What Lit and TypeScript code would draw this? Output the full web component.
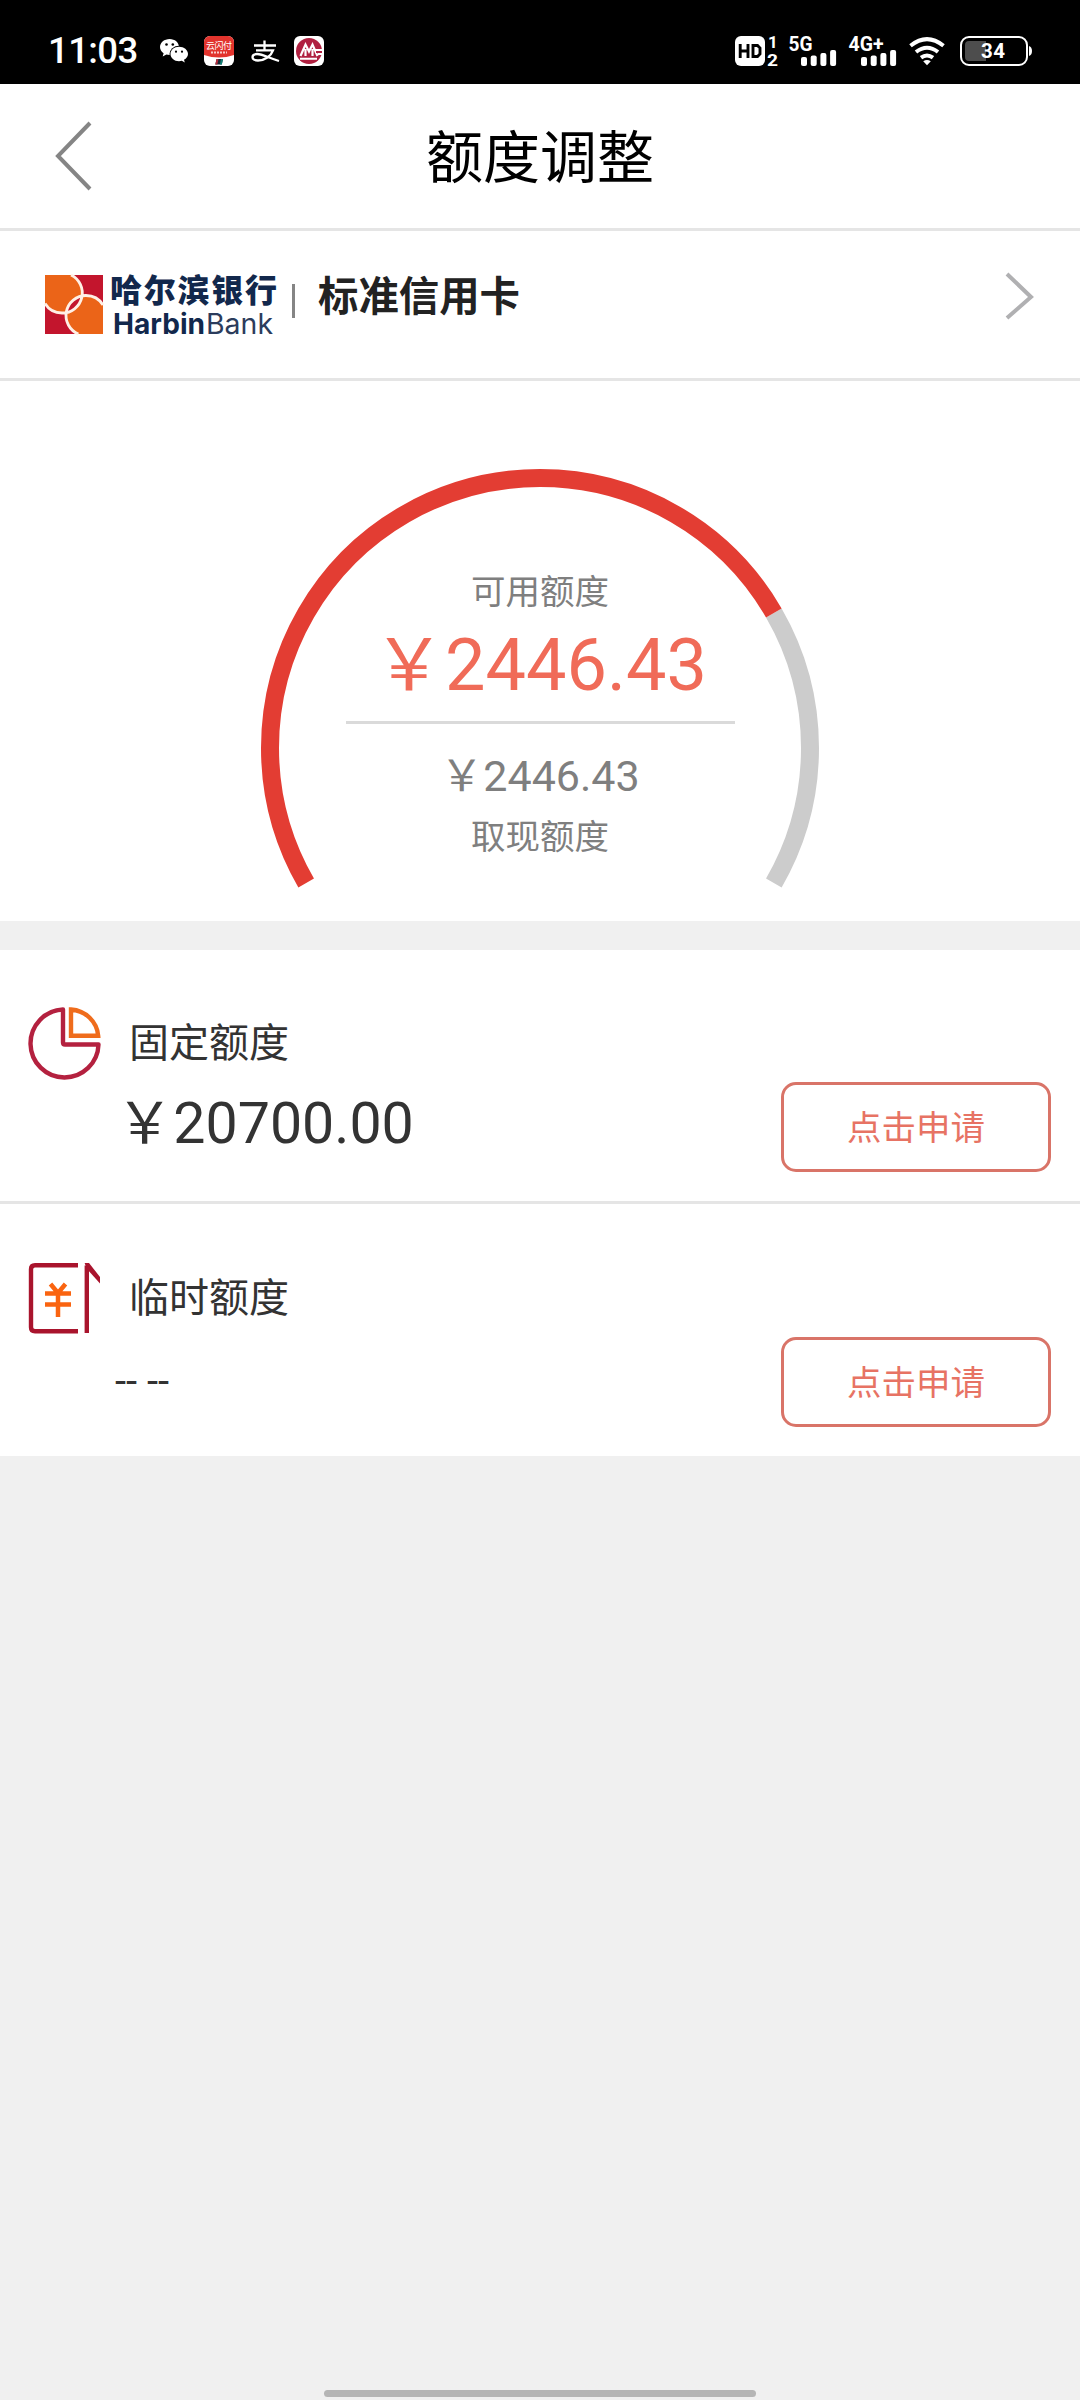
import { LitElement, html, css, svg } from "lit";
import { customElement, property } from "lit/decorators.js";

const SANS = css`Roboto, "Noto Sans CJK SC", sans-serif`;

@customElement("status-bar")
class StatusBar extends LitElement {
  static styles = css`
    :host { display: block; }
    .bar {
      box-sizing: border-box; height: 84px; padding: 17px 48px 0 48px; background: #000; color: #fff;
      display: flex; align-items: center; justify-content: space-between; font-family: ${SANS};
    }
    .side { display: flex; align-items: center; }
    .time { font-size: 36.500px; line-height: 50px; font-weight: 500; width: 112px; letter-spacing: -0.6px; }
    svg { display: block; flex: none; overflow: visible; font-family: ${SANS}; }
    .wechat { margin-right: 16px; }
    .union { margin-right: 17px; }
    .ali { margin-right: 14px; }
    .hd { margin-right: 11px; }
    .net { margin-right: 12px; }
    .wifi { margin-right: 15px; }
  `;

  private signal(label: string) {
    return html`<svg class="net" width="48" height="30" viewBox="0 0 48 30" fill="#fff">
      <text x="-0.5" y="14.500" font-size="20.500" font-weight="700" textLength=${label.length > 2 ? 35 : 24}
        lengthAdjust="spacingAndGlyphs">${label}</text>
      ${[21, 19.5, 17, 14].map((y, i) => svg`<rect x=${12 + i * 9.7} y=${y} width="6" height=${30 - y} rx="2" />`)}
    </svg>`;
  }

  render() {
    return html`<div class="bar">
      <div class="side">
        <div class="time">11:03</div>
        <svg class="wechat" width="28" height="26" viewBox="0 0 28 26">
          <path fill="#fff" d="M9.600 1C4.300 1 0 4.600 0 9c0 2.600 1.400 4.800 3.600 6.300L2.700 18.500l3.700-1.900c1 .3 2.100.4 3.200.4C14.900 17 19 13.400 19 9S14.900 1 9.600 1Z"/>
          <ellipse cx="19" cy="16" rx="9.500" ry="8.300" fill="#000"/>
          <path fill="#fff" d="M19 8.800c-4.800 0-8.500 3.200-8.500 7.200s3.700 7.200 8.500 7.200c1 0 1.900-.1 2.800-.4l3 1.700-.8-2.700c2.400-1.300 4-3.400 4-5.800 0-4-4-7.200-9-7.200Z"/>
          <g fill="#000"><circle cx="6.500" cy="6.500" r="1.300"/><circle cx="12.800" cy="6.500" r="1.300"/><circle cx="16" cy="13.700" r="1.100"/><circle cx="22" cy="13.700" r="1.100"/></g>
        </svg>
        <svg class="union" width="30" height="30" viewBox="0 0 30 30">
          <rect width="30" height="30" rx="6" fill="#fff"/>
          <path d="M6 0h18a6 6 0 0 1 6 6v13Q15 24 0 19V6a6 6 0 0 1 6-6Z" fill="#e2342d"/>
          <text x="2" y="13" font-size="9" font-weight="400" fill="#fff" textLength="26">云闪付</text>
          <path d="M7 16.500h16" stroke="#fff" stroke-opacity=".75" stroke-width="2" stroke-dasharray="2 1"/>
          <path d="M12.500 23h6.500l-1.200 5.500h-6.500Z" fill="#172b38"/>
          <path d="M12.500 23h2l-1.200 5.500h-2Z" fill="#b52b3a"/><path d="M17 23h2l-1.200 5.500h-2Z" fill="#118075"/>
        </svg>
        <svg class="ali" width="29" height="26" viewBox="0 0 29 26" fill="none" stroke="#fff" stroke-width="2.300">
          <path d="M3 7.500h22M13.500 2.500v9M5 12.300h17C20 18 14 22.500 7 22.500c-3.500 0-5.500-1.300-5.500-3.300 0-2.200 2-3.200 4.500-3.200 5.500 0 12 4 22 7"/>
        </svg>
        <svg width="30" height="30" viewBox="0 0 30 30">
          <rect width="30" height="30" rx="6" fill="#fff"/>
          <circle cx="15" cy="15" r="13" fill="#b02040"/>
          <path d="M6.500 20 11.500 8.500 15 15.500l3.500-7L23.500 20M11.500 13v7M18.500 13v7" fill="none" stroke="#fff" stroke-width="2.200"/>
          <path d="M6 22.800h17M21 14h9M24 18h6" stroke="#fff" stroke-width="2"/>
          <path d="M22 16h6" stroke="#b02040" stroke-width="2"/>
        </svg>
      </div>
      <div class="side">
        <svg class="hd" width="43" height="30" viewBox="0 0 43 30" fill="#fff">
          <rect width="30" height="30" rx="6"/>
          <path d="M5.200 8v14M13 8v14M5.200 15H13M18 9.500h4.500l2.500 2.500v6l-2.500 2.500H18Z" fill="none" stroke="#000" stroke-width="2.900"/>
          <text x="33" y="12" font-size="17" font-weight="700">1</text>
          <text x="32" y="29.500" font-size="17" font-weight="700" textLength="11" lengthAdjust="spacingAndGlyphs">2</text>
        </svg>
        ${this.signal("5G")}${this.signal("4G+")}
        <svg class="wifi" width="36" height="30" viewBox="0 0 36 30" fill="none" stroke="#fff" stroke-width="4">
          <path d="M1.500 9.800Q18-3.500 34.500 9.800M7 16Q18 7.500 29 16M12 21.700q6-4.400 12 0"/>
          <path d="M14.200 25.200q3.800-2.600 7.600 0L18 29.200Z" fill="#fff" stroke="none"/>
        </svg>
        <svg width="72" height="30" viewBox="0 0 72 30">
          <rect x="1" y="1" width="66" height="28" rx="8" fill="none" stroke="#fff" stroke-width="2"/>
          <path d="M9 5h17v20H9a4 4 0 0 1-4-4V9a4 4 0 0 1 4-4Z" fill="#4d4d4d"/>
          <path d="M69 10q3 1 3 5t-3 5Z" fill="#fff"/>
          <text x="21" y="22" font-size="20.500" font-weight="700" fill="#fff" textLength="24">34</text>
        </svg>
      </div>
    </div>`;
  }
}

@customElement("nav-header")
class NavHeader extends LitElement {
  @property() heading = "";
  static styles = css`
    :host { display: block; }
    .head {
      box-sizing: border-box; height: 147px; border-bottom: 3px solid #e5e5e5; background: #fff;
      display: grid; grid-template-columns: 148px 1fr 148px; align-items: center;
      font-family: ${SANS};
    }
    svg { display: block; margin-left: 53px; }
    h1 { margin: 0; padding-top: 5px; text-align: center; font-weight: 400; font-size: 57px; line-height: 80px; color: #000; }
  `;
  render() {
    return html`<div class="head">
      <svg width="40" height="70" viewBox="0 0 40 70" fill="none" stroke="#858585" stroke-width="4"><path d="M37 2 5 35l32 33"/></svg>
      <h1>${this.heading}</h1>
    </div>`;
  }
}

@customElement("card-picker")
class CardPicker extends LitElement {
  @property() name = "";
  static styles = css`
    :host { display: block; }
    .row {
      box-sizing: border-box; height: 150px; border-bottom: 3px solid #e5e5e5; background: #fff;
      display: flex; align-items: flex-start; padding: 37px 45px 0 45px; font-family: ${SANS};
    }
    .logo { display: block; margin-top: 7px; flex: none; overflow: visible; }
    .sep { width: 3px; height: 34px; margin: 16px 0 0 13px; background: #858585; }
    .name { margin-left: 23px; font-size: 40.400px; line-height: 60px; font-weight: 700; color: #222; flex: 1; }
    .go { display: block; margin-top: 3px; }
  `;
  render() {
    return html`<div class="row">
      <svg class="logo" width="234" height="59" viewBox="0 0 234 59">
        <rect width="58" height="59" fill="#c3152d"/>
        <path d="M0 0H26A20 20 0 0 1 17 38 20 20 0 0 1 0 28.500Z" fill="#eb6418"/>
        <path d="M58 59H33.400A20 20 0 0 1 41 20.500 20 20 0 0 1 58 30Z" fill="#eb6418"/>
        <path d="M36.800 20.900A20 20 0 0 1 21.200 37.600 20 20 0 0 1 36.800 20.900Z" fill="#c3152d"/>
        <g fill="none" stroke="#fff0e6" stroke-width="2.800">
          <path d="M26 0A20 20 0 0 1 17 38 20 20 0 0 1 0 28.500M33.400 59A20 20 0 0 1 41 20.500 20 20 0 0 1 58 30"/>
        </g>
        <text x="65" y="26.500" font-size="32" font-weight="900" fill="#12284c" font-family="Noto Sans CJK SC" textLength="167">哈尔滨银行</text>
        <text x="68" y="59" font-size="28.500" font-weight="700" fill="#12284c" font-family="Inter, sans-serif" textLength="92" lengthAdjust="spacingAndGlyphs">Harbin</text>
        <text x="161" y="59" font-size="28.500" font-weight="400" fill="#2b3c5c" font-family="Inter, sans-serif" textLength="67" lengthAdjust="spacingAndGlyphs">Bank</text>
      </svg>
      <span class="sep"></span>
      <div class="name">${this.name}</div>
      <svg class="go" width="30" height="50" viewBox="0 0 30 50" fill="none" stroke="#b0b0b2" stroke-width="4"><path d="M2 3l24 23L2 47"/></svg>
    </div>`;
  }
}

@customElement("quota-gauge")
class QuotaGauge extends LitElement {
  @property() available = "";
  @property() cash = "";
  static styles = css`
    :host { display: block; }
    .panel { box-sizing: border-box; height: 540px; padding-top: 88px; background: #fff; display: grid; justify-content: center; font-family: ${SANS}; }
    .arc, .info { grid-area: 1 / 1; }
    .arc { display: block; }
    .info { display: flex; flex-direction: column; align-items: center; padding-top: 98px; color: #7f7f7f; }
    .label { font-size: 34.500px; line-height: 50px; }
    .main { font-size: 72px; line-height: 86px; margin-top: 6px; color: #f06b58; }
    .rule { width: 389px; height: 3px; margin-top: 12px; background: #dadada; }
    .sub { font-size: 43px; line-height: 60px; margin: 22px 0 6px; }
  `;
  render() {
    return html`<div class="panel">
      <svg class="arc" width="560" height="430" viewBox="0 0 560 430" fill="none" stroke-width="18">
        <path d="M513.830 144A270 270 0 0 1 513.830 414" stroke="#ccc"/>
        <path d="M46.170 414A270 270 0 0 1 280 9 270 270 0 0 1 513.830 144" stroke="#e33d33"/>
      </svg>
      <div class="info">
        <div class="label">可用额度</div>
        <div class="main">${this.available}</div>
        <div class="rule"></div>
        <div class="sub">${this.cash}</div>
        <div class="label">取现额度</div>
      </div>
    </div>`;
  }
}

@customElement("quota-row")
class QuotaRow extends LitElement {
  @property() kind = "fixed";
  @property() label = "";
  @property() amount = "";
  static styles = css`
    :host { display: block; }
    .row {
      box-sizing: border-box; height: 251px; padding: 55px 29px 0 27px; background: #fff; font-family: ${SANS};
      display: grid; grid-template-columns: 102px 1fr 270px; grid-template-rows: 77px 90px;
    }
    .temp { height: 252px; padding-top: 56px; }
    .icon { display: block; }
    .label { grid-column: 2 / 4; font-size: 40px; line-height: 77px; color: #333; }
    .amount { grid-column: 1 / 3; padding-left: 89px; margin-top: -3px; font-size: 57.300px; line-height: 90px; color: #333; }
    .empty { padding-left: 88px; margin-top: 0; font-size: 40px; }
    .apply {
      box-sizing: border-box; width: 270px; height: 90px; border: 3px solid #d97468; border-radius: 15px;
      background: #fff; padding: 3px 0 0; font-family: ${SANS}; font-size: 34.500px; line-height: 81px; color: #e77364;
    }
  `;
  private icon() {
    return this.kind === "fixed"
      ? html`<svg class="icon" width="76" height="76" viewBox="0 0 76 76" fill="none" stroke-width="4.400">
          <path d="M36 4.500A34 34 0 1 0 71.500 39.500H38q-2 0-2-2Z" stroke="#b4213f" stroke-linejoin="round"/>
          <path d="M44 4.500V30.800H71.200A29.500 28.500 0 0 0 44 4.500Z" stroke="#ef6c1c"/>
        </svg>`
      : html`<svg class="icon" width="76" height="76" viewBox="0 0 76 76" fill="none" stroke-width="4.400">
          <path d="M51 5.200H8q-4 0-4 4v58q0 4 4 4h43M59.800 73V5.500" stroke="#a9142d"/>
          <path d="M57.600 3h4.400L73 17v6.500L60 9Z" fill="#a9142d"/>
          <path d="M23.500 24l7.500 9 7.500-9M18 33.500h26M18 44.500h26M31 33v24" stroke="#fa6410" stroke-width="4.500"/>
        </svg>`;
  }
  render() {
    return html`<div class="row ${this.kind}">
      ${this.icon()}
      <div class="label">${this.label}</div>
      <div class="amount ${this.kind === "fixed" ? "" : "empty"}">${this.amount}</div>
      <button class="apply">点击申请</button>
    </div>`;
  }
}

@customElement("app-root")
class AppRoot extends LitElement {
  static styles = css`
    :host { display: block; }
    .page { box-sizing: border-box; width: 1080px; height: 2400px; background: #f0f0f0; display: flex; flex-direction: column; overflow: hidden; }
    .list { margin-top: 29px; display: grid; gap: 3px; background: #e5e5e5; }
    .home { width: 432px; height: 7px; border-radius: 4px; background: #b5b5b5; margin: auto auto 3px; }
  `;
  render() {
    return html`<main class="page">
      <status-bar></status-bar>
      <nav-header heading="额度调整"></nav-header>
      <card-picker name="标准信用卡"></card-picker>
      <quota-gauge available="￥2446.43" cash="￥2446.43"></quota-gauge>
      <section class="list">
        <quota-row kind="fixed" label="固定额度" amount="￥20700.00"></quota-row>
        <quota-row kind="temp" label="临时额度" amount="-- --"></quota-row>
      </section>
      <div class="home"></div>
    </main>`;
  }
}
